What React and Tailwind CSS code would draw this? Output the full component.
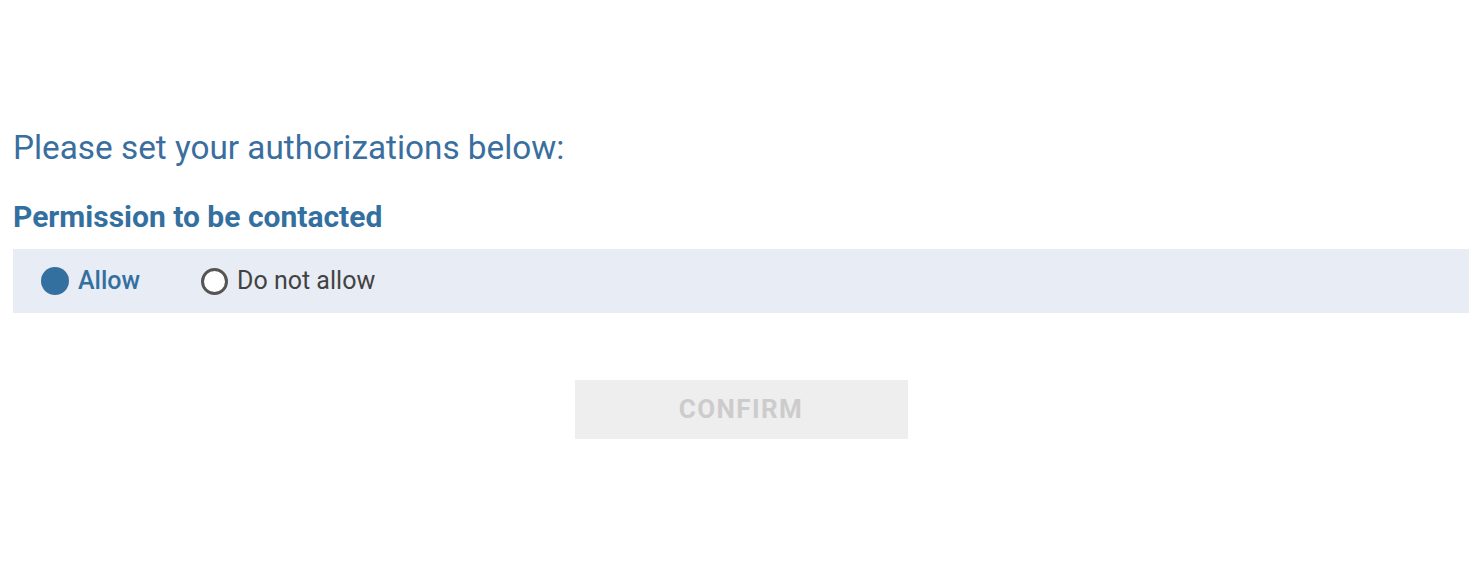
const Radio = ({ checked, label }) => (
  <label className="flex items-center gap-[9px] cursor-pointer">
    {checked ? (
      <span className="w-[28px] h-[28px] rounded-full bg-[#34709f]" />
    ) : (
      <span className="w-[27px] h-[27px] rounded-full border-[3px] border-[#555555] bg-white" />
    )}
    <span className={`text-[25px] ${checked ? "text-[#34709f] font-medium" : "text-[#424242]"}`}>
      {label}
    </span>
  </label>
);

export default function App() {
  return (
    <div
      className="min-h-[569px] bg-white pl-[13px] pr-[14px] pt-[127px]"
      style={{ fontFamily: "Roboto, 'Liberation Sans', sans-serif" }}
    >
      <h1 className="text-[33.3px] leading-[42px] text-[#3a6e9e]">Please set your authorizations below:</h1>
      <h2 className="mt-[30px] text-[30px] leading-[36px] font-bold text-[#34709f]">Permission to be contacted</h2>
      <div className="mt-[14px] h-[64px] bg-[#e8ecf4] flex items-center pl-[28px] gap-[61px]">
        <Radio checked label="Allow" />
        <Radio label="Do not allow" />
      </div>
      <div className="flex justify-center mt-[67px]">
        <button
          disabled
          className="w-[333px] h-[59px] bg-[#eeeeee] text-[#cccccc] text-[26px] font-bold tracking-[1.4px]"
        >
          CONFIRM
        </button>
      </div>
    </div>
  );
}
